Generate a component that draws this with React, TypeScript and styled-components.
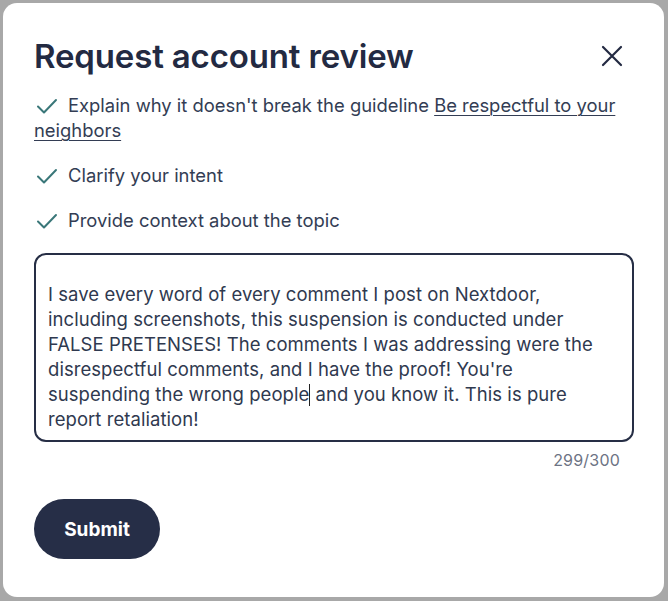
import React from "react";
import styled, { createGlobalStyle } from "styled-components";

const Global = createGlobalStyle`
  html, body { margin: 0; padding: 0; background: #a8a8a8; }
  body { font-family: Inter, "Noto Sans", sans-serif; }
  * { box-sizing: border-box; }
`;

const Backdrop = styled.div`
  width: 668px;
  height: 601px;
  padding: 3px 4px 4px 3px;
  background: #a8a8a8;
`;

const Modal = styled.div`
  width: 661px;
  height: 594px;
  background: #ffffff;
  border-radius: 14px;
  padding: 30px 30px 0 31px;
  display: flex;
  flex-direction: column;
`;

const Header = styled.div`
  display: flex;
  align-items: center;
  justify-content: space-between;
  height: 46px;
`;

const Title = styled.h1`
  margin: 0;
  font-size: 33px;
  font-weight: 600;
  letter-spacing: -0.15px;
  color: #232a42;
`;

const CloseButton = styled.button`
  border: none;
  background: none;
  padding: 0;
  width: 24px;
  height: 24px;
  margin-right: 10px;
  display: flex;
  align-items: center;
  justify-content: center;
  color: #232a42;
`;

const Checklist = styled.ul`
  list-style: none;
  margin: 14px 0 0 0;
  padding: 0;
  display: flex;
  flex-direction: column;
  gap: 20px;
`;

const Item = styled.li`
  font-size: 18.4px;
  line-height: 25px;
  color: #333d54;
  letter-spacing: 0;
`;

const Check = styled.svg`
  display: inline-block;
  vertical-align: -3px;
  margin: 0 10px 0 2px;
`;

const Link = styled.a`
  color: #333d54;
  text-decoration: underline;
  text-underline-offset: 3px;
  text-decoration-thickness: 1px;
`;

const TextBox = styled.div`
  margin-top: 20px;
  border: 2px solid #262e45;
  border-radius: 12px;
  padding: 27px 12px 10px 12px;
  font-size: 18.5px;
  line-height: 25px;
  color: #2f394f;
  letter-spacing: 0.05px;
  height: 189px;
  white-space: nowrap;
`;

const Caret = styled.span`
  display: inline-block;
  width: 1px;
  height: 22px;
  background: #222;
  vertical-align: -5px;
`;

const Counter = styled.div`
  text-align: right;
  font-size: 16px;
  letter-spacing: 0.2px;
  color: #6d7384;
  margin-top: 8px;
  padding-right: 14px;
`;

const Submit = styled.button`
  margin-top: 29px;
  width: 126px;
  height: 60px;
  border-radius: 30px;
  border: none;
  background: #262e47;
  color: #ffffff;
  font-family: Inter, sans-serif;
  font-size: 19px;
  font-weight: 700;
  letter-spacing: 0;
  align-self: flex-start;
`;

const CheckIcon = () => (
  <Check width="22" height="18" viewBox="0 0 22 18">
    <path d="M2 9.5 L8 15.5 L20 3" fill="none" stroke="#3a7779" strokeWidth="2" strokeLinecap="round" strokeLinejoin="round" />
  </Check>
);

export default function App() {
  return (
    <>
      <Global />
      <Backdrop>
        <Modal>
          <Header>
            <Title>Request account review</Title>
            <CloseButton aria-label="Close">
              <svg width="22" height="22" viewBox="0 0 22 22">
                <path d="M2 2 L20 20 M20 2 L2 20" stroke="#232a42" strokeWidth="2.2" strokeLinecap="round" />
              </svg>
            </CloseButton>
          </Header>
          <Checklist>
            <Item>
              <CheckIcon />
              Explain why it doesn't break the guideline <Link>Be respectful to your neighbors</Link>
            </Item>
            <Item>
              <CheckIcon />
              Clarify your intent
            </Item>
            <Item>
              <CheckIcon />
              Provide context about the topic
            </Item>
          </Checklist>
          <TextBox>
            I save every word of every comment I post on Nextdoor,<br />
            including screenshots, this suspension is conducted under<br />
            FALSE PRETENSES! The comments I was addressing were the<br />
            disrespectful comments, and I have the proof! You're<br />
            suspending the wrong people<Caret /> and you know it. This is pure<br />
            report retaliation!
          </TextBox>
          <Counter>299/300</Counter>
          <Submit>Submit</Submit>
        </Modal>
      </Backdrop>
    </>
  );
}
